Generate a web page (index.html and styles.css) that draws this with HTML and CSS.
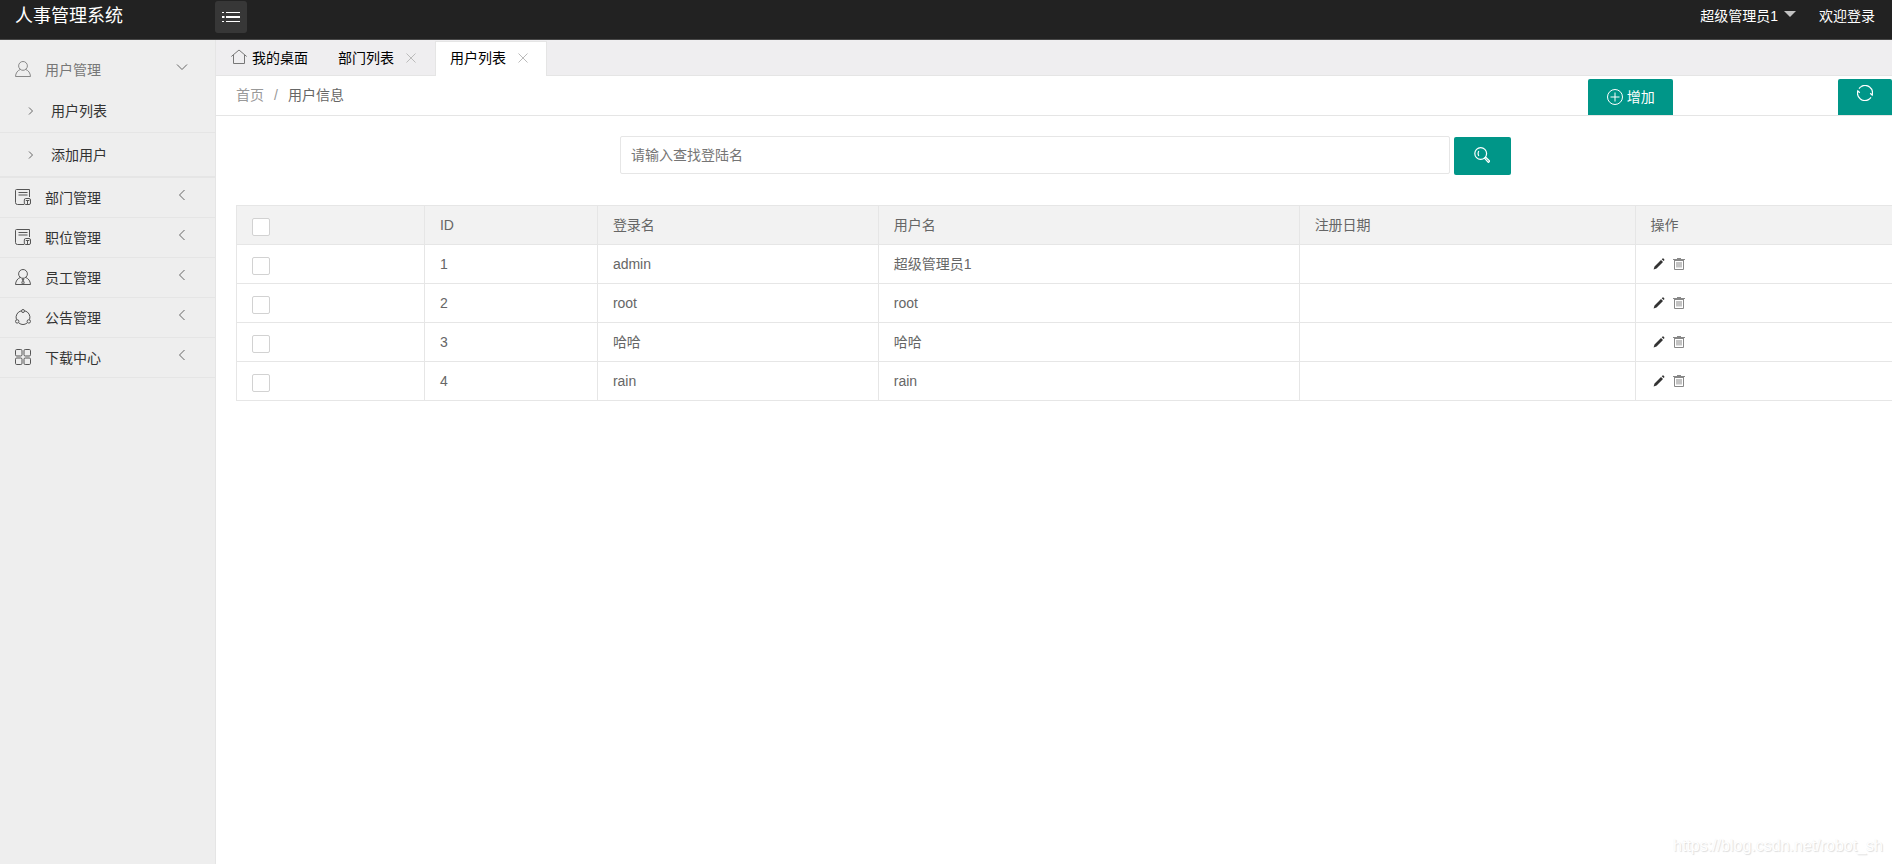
FILE: index.html
```html
<!DOCTYPE html>
<html lang="zh-CN">
<head>
<meta charset="utf-8">
<title>人事管理系统</title>
<link rel="stylesheet" href="styles.css">
</head>
<body>
<svg class="sprite" aria-hidden="true">
  <symbol id="i-user" viewBox="0 0 16 16"><circle cx="8" cy="4.900" r="4.400"/><path d="M5.400 8.400C2.500 9.500.7 12 .5 15.500h15c-.2-3.500-2-6-4.900-7.100"/></symbol>
  <symbol id="i-staff" viewBox="0 0 16 16"><circle cx="8" cy="4.900" r="4.400"/><path d="M5.400 8.400C2.500 9.500.7 12 .5 15.500h15c-.2-3.500-2-6-4.900-7.100M7.200 10h1.600l-.4 1.400.8 2.600L8 15.500 6.800 14l.8-2.600z"/></symbol>
  <symbol id="i-form" viewBox="0 0 16 16"><path d="M14.500 8V.5H1.500q-1 0-1 1v12q0 2 2 2H9M3.500 3.500h9M3.500 6h9"/><path d="M9.300 14.200V11q0-1.500 1.500-1.500h3.200q1.500 0 1.500 1.500v3q0 1.500-1.500 1.500h-3.200q-1.500 0-1.500-1.300M10.800 11.500h3.500M12.500 11.500v3.500"/></symbol>
  <symbol id="i-share" viewBox="0 0 16 16"><path d="M6.200 1.800A6.800 6.800 0 0 0 1.400 10.500M9.800 1.800a6.800 6.800 0 0 1 4.800 8.700M3.900 14a6.800 6.800 0 0 0 8.200 0"/><circle cx="8" cy="2" r="1.500"/><circle cx="2.200" cy="12.400" r="1.700"/><circle cx="13.800" cy="12.400" r="1.700"/></symbol>
  <symbol id="i-grid" viewBox="0 0 16 16"><rect x=".5" y=".5" width="6.500" height="6.500" rx="1.200"/><rect x="9" y=".5" width="6.500" height="6.500" rx="1.200"/><rect x=".5" y="9" width="6.500" height="6.500" rx="1.200"/><rect x="9" y="9" width="6.500" height="6.500" rx="1.200"/></symbol>
  <symbol id="i-left" viewBox="0 0 12 12"><path d="M8.500 1 3.500 6l5 5"/></symbol>
  <symbol id="i-down" viewBox="0 0 12 12"><path d="m1 3.500 5 5 5-5"/></symbol>
  <symbol id="i-right" viewBox="0 0 8 8"><path d="m2 .5 3.500 3.500L2 7.500"/></symbol>
  <symbol id="i-close" viewBox="0 0 10 10"><path d="m.5.5 9 9M9.500.5l-9 9"/></symbol>
  <symbol id="i-pencil" viewBox="0 0 12 12"><path d="M.6 11.500l.9-3L8 2l2 2-6.500 6.500zM8.700 1.300l.9-.8q.5-.3.9.1l.8.8q.4.4 0 .9l-.7.8z"/></symbol>
  <symbol id="i-trash" viewBox="0 0 12 12"><path d="M0 1.500h12M4 .5h4M1 2.500h10M1.500 2.500v9h9v-9"/><path class="slats" d="M4 4v5.500M6 4v5.500M8 4v5.500"/></symbol>
</svg>

<header class="topbar">
  <h1 class="brand">人事管理系统</h1>
  <button class="menu-toggle" type="button" aria-label="展开或收起菜单">
    <svg class="icon-menu" viewBox="0 0 18 12"><path d="M0 1.500h2M4 1.500h14M0 10.500h2M4 10.500h14"/><path class="thick" d="M0 6h2.500M4 6h14"/></svg>
  </button>
  <nav class="account">
    <a class="account-link" href="#">超级管理员1<span class="caret"></span></a>
    <a class="account-link" href="#">欢迎登录</a>
  </nav>
</header>

<div class="shell">
  <nav class="sidebar">
    <a class="item open" href="#"><svg class="icon"><use href="#i-user"/></svg><span class="label">用户管理</span><svg class="arrow"><use href="#i-down"/></svg></a>
    <div class="submenu">
      <a class="subitem" href="#"><svg class="icon-small"><use href="#i-right"/></svg>用户列表</a>
      <a class="subitem" href="#"><svg class="icon-small"><use href="#i-right"/></svg>添加用户</a>
    </div>
    <a class="item" href="#"><svg class="icon"><use href="#i-form"/></svg><span class="label">部门管理</span><svg class="arrow"><use href="#i-left"/></svg></a>
    <a class="item" href="#"><svg class="icon"><use href="#i-form"/></svg><span class="label">职位管理</span><svg class="arrow"><use href="#i-left"/></svg></a>
    <a class="item" href="#"><svg class="icon"><use href="#i-staff"/></svg><span class="label">员工管理</span><svg class="arrow"><use href="#i-left"/></svg></a>
    <a class="item" href="#"><svg class="icon"><use href="#i-share"/></svg><span class="label">公告管理</span><svg class="arrow"><use href="#i-left"/></svg></a>
    <a class="item" href="#"><svg class="icon"><use href="#i-grid"/></svg><span class="label">下载中心</span><svg class="arrow"><use href="#i-left"/></svg></a>
  </nav>

  <main class="main">
    <div class="tabs">
      <div class="tab"><svg class="icon-home" viewBox="0 0 16 16"><path d="M.3 7.500 8 1l7.700 6.500M2.500 6v8.500h11V6"/></svg>我的桌面</div>
      <div class="tab">部门列表<button class="tab-close" type="button" aria-label="关闭部门列表"><svg class="icon-close"><use href="#i-close"/></svg></button></div>
      <div class="tab active">用户列表<button class="tab-close" type="button" aria-label="关闭用户列表"><svg class="icon-close"><use href="#i-close"/></svg></button></div>
    </div>

    <div class="crumbbar">
      <nav class="crumbs"><a class="crumb" href="#">首页</a><span class="slash">/</span><span class="current">用户信息</span></nav>
      <button class="btn add" type="button"><svg class="icon" viewBox="0 0 16 16"><circle cx="8" cy="8" r="7.500"/><path d="M8 3.500v9M3.500 8h9"/></svg>增加</button>
      <button class="btn refresh" type="button" aria-label="刷新"><svg class="icon icon-refresh" viewBox="0 0 16 16"><path d="M11.500 14.600A7.400 7.400 0 0 1 .8 6.200M0 8.500l.8-2.600 2 1.800M2 3.600A7.400 7.400 0 0 1 4.500 1.500M4.500 1.400A7.400 7.400 0 0 1 15.200 9.800M16 7.500l-.8 2.600-2-1.800M14 12.400a7.400 7.400 0 0 1-2.500 2.200"/></svg></button>
    </div>

    <form class="search">
      <input class="search-input" type="text" placeholder="请输入查找登陆名" aria-label="登陆名">
      <button class="btn search-btn" type="button" aria-label="查找"><svg class="icon icon-search" viewBox="0 0 16 16"><circle cx="6.700" cy="6.500" r="5.900"/><path d="M4.800 4q-1.400 2.500 0 5M10.600 11.300l1.100-1.100 4 3.900-1.300 1.400z"/></svg></button>
    </form>

    <table class="users">
      <colgroup><col class="c-check"><col class="c-id"><col class="c-login"><col class="c-name"><col class="c-date"><col></colgroup>
      <thead>
        <tr><th><input class="check" type="checkbox" aria-label="全选"></th><th>ID</th><th>登录名</th><th>用户名</th><th>注册日期</th><th>操作</th></tr>
      </thead>
      <tbody>
        <tr><td><input class="check" type="checkbox" aria-label="选择 admin"></td><td>1</td><td>admin</td><td>超级管理员1</td><td></td><td><div class="ops"><a class="op" href="#" aria-label="编辑"><svg class="icon-op solid"><use href="#i-pencil"/></svg></a><a class="op" href="#" aria-label="删除"><svg class="icon-op"><use href="#i-trash"/></svg></a></div></td></tr>
        <tr><td><input class="check" type="checkbox" aria-label="选择 root"></td><td>2</td><td>root</td><td>root</td><td></td><td><div class="ops"><a class="op" href="#" aria-label="编辑"><svg class="icon-op solid"><use href="#i-pencil"/></svg></a><a class="op" href="#" aria-label="删除"><svg class="icon-op"><use href="#i-trash"/></svg></a></div></td></tr>
        <tr><td><input class="check" type="checkbox" aria-label="选择 哈哈"></td><td>3</td><td>哈哈</td><td>哈哈</td><td></td><td><div class="ops"><a class="op" href="#" aria-label="编辑"><svg class="icon-op solid"><use href="#i-pencil"/></svg></a><a class="op" href="#" aria-label="删除"><svg class="icon-op"><use href="#i-trash"/></svg></a></div></td></tr>
        <tr><td><input class="check" type="checkbox" aria-label="选择 rain"></td><td>4</td><td>rain</td><td>rain</td><td></td><td><div class="ops"><a class="op" href="#" aria-label="编辑"><svg class="icon-op solid"><use href="#i-pencil"/></svg></a><a class="op" href="#" aria-label="删除"><svg class="icon-op"><use href="#i-trash"/></svg></a></div></td></tr>
      </tbody>
    </table>
  </main>
</div>
<div class="watermark">https://blog.csdn.net/robot_sh</div>
</body>
</html>
```

FILE: styles.css
```css
* { box-sizing: border-box; }

body {
  margin: 0;
  min-height: 100vh;
  display: flex;
  flex-direction: column;
  position: relative;
  background: #fff;
  color: #666;
  font: 14px/20px "Liberation Sans", "Noto Sans CJK SC", sans-serif;
}

a { color: inherit; text-decoration: none; }
button, input { font: inherit; }
button { border: 0; padding: 0; cursor: pointer; }

svg { display: block; flex: none; fill: none; stroke: currentColor; stroke-width: 1; }
.sprite { position: absolute; width: 0; height: 0; }
.icon { width: 16px; height: 16px; }

/* Top bar */
.topbar {
  display: flex;
  align-items: flex-start;
  height: 40px;
  background: #222;
  border-bottom: 1px solid #484848;
  color: #fff;
}
.brand {
  width: 215px;
  margin: 0;
  padding-left: 15px;
  font-size: 18px;
  font-weight: 400;
  line-height: 32px;
}
.menu-toggle {
  display: grid;
  place-items: center;
  width: 32px;
  height: 32px;
  margin-top: 1px;
  border-radius: 3px;
  background: #373737;
  color: #fff;
}
.icon-menu { width: 18px; height: 12px; }
.icon-menu .thick { stroke-width: 2; }
.account {
  display: flex;
  gap: 23px;
  margin-left: auto;
  padding: 6px 17px 0 0;
}
.account-link { display: flex; }
.caret {
  margin: 5px 0 0 6px;
  height: 6px;
  border: 6px solid transparent;
  border-top-color: #c2c2c2;
  border-bottom: 0;
}

/* Side menu */
.shell { display: flex; flex: 1; }
.sidebar {
  flex: none;
  width: 216px;
  padding-top: 10px;
  background: #eee;
  border-right: 1px solid #e5e5e5;
  color: #333;
}
.item {
  display: flex;
  align-items: center;
  height: 40px;
  padding: 0 27px 0 15px;
  border-bottom: 1px solid #e5e5e5;
}
.item .icon { margin-bottom: 1px; color: #555; }
.item .label { flex: 1; padding-left: 14px; }
.arrow { width: 12px; height: 12px; margin-bottom: 6px; color: #666; }
.item.open { height: 39px; border-bottom: 0; color: #777; }
.item.open .icon { color: #888; }
.submenu { border-bottom: 1px solid #e5e5e5; }
.subitem {
  display: flex;
  align-items: center;
  gap: 16px;
  height: 44px;
  padding-left: 27px;
  border-bottom: 1px solid #e5e5e5;
}
.icon-small { width: 8px; height: 8px; color: #666; }

/* Tabs */
.main { flex: 1; min-width: 0; }
.tabs {
  display: flex;
  height: 36px;
  padding-top: 1px;
  background: #efeef0;
  border-bottom: 1px solid #e5e5e5;
  color: #000;
}
.tab {
  display: flex;
  align-items: center;
  height: 34px;
  padding: 0 15px;
}
.tab.active {
  height: 35px;
  padding: 0 14px 2px;
  background: #fff;
  border: 1px solid #e5e5e5;
  border-bottom: 0;
}
.icon-home { width: 16px; height: 16px; margin: 0 5px 2px 0; color: #777; }
.tab-close {
  display: grid;
  place-items: center;
  width: 18px;
  height: 18px;
  margin-left: 8px;
  background: none;
  color: #bbb;
}
.icon-close { width: 10px; height: 10px; }

/* Breadcrumb bar */
.crumbbar {
  display: flex;
  align-items: flex-end;
  height: 40px;
  padding-left: 20px;
  border-bottom: 1px solid #e5e5e5;
}
.crumbs {
  display: flex;
  align-self: center;
  margin-right: auto;
  padding-bottom: 2px;
}
.crumb, .slash { color: #999; }
.slash { padding: 0 10px; }
.btn {
  display: flex;
  align-items: center;
  justify-content: center;
  background: #009688;
  border-radius: 2px;
  color: #fff;
}
.add, .refresh { height: 36px; border-radius: 2px 2px 0 0; }
.add { gap: 4px; width: 85px; margin-right: 9.95%; }
.refresh { width: 54px; padding-bottom: 8px; }
.icon-refresh { stroke-width: 1.2; }

/* Search */
.search {
  display: flex;
  align-items: flex-start;
  gap: 4px;
  margin: 20px 22.73% 30px 24.1%;
}
.search-input {
  flex: 1;
  min-width: 0;
  height: 38px;
  padding: 0 10px;
  border: 1px solid #e6e6e6;
  border-radius: 2px;
  background: #fff;
  color: #333;
}
.search-input::placeholder { color: #757575; }
.search-btn { width: 57px; height: 38px; margin-top: 1px; padding: 0 2px 2px 0; }
.icon-search { stroke-width: 1.2; }

/* Table */
.users {
  width: calc(100% - 20px);
  margin-left: 20px;
  border-collapse: collapse;
  table-layout: fixed;
}
.c-check { width: 11.35%; }
.c-id { width: 10.45%; }
.c-login { width: 16.97%; }
.c-name { width: 25.42%; }
.c-date { width: 20.29%; }
.users th, .users td {
  height: 39px;
  padding: 0 15px;
  border: 1px solid #e6e6e6;
  font-weight: 400;
  text-align: left;
}
.users th:last-child, .users td:last-child { border-right: 0; }
.users th { background: #f2f2f2; }
.check {
  appearance: none;
  display: block;
  width: 18px;
  height: 18px;
  margin: 4px 0 0;
  border: 1px solid #d2d2d2;
  border-radius: 2px;
  background: #fff;
}
.ops { display: flex; gap: 8px; padding-left: 2px; }
.icon-op { width: 12px; height: 12px; color: #888; }
.icon-op .slats { color: #aaa; }
.icon-op.solid { fill: #333; stroke: none; }

.watermark {
  position: absolute;
  right: 9px;
  bottom: 8px;
  color: #fff;
  font-size: 16px;
  text-shadow: 1px 1px 1px #ddd, 0 0 1px #eee;
}
```
